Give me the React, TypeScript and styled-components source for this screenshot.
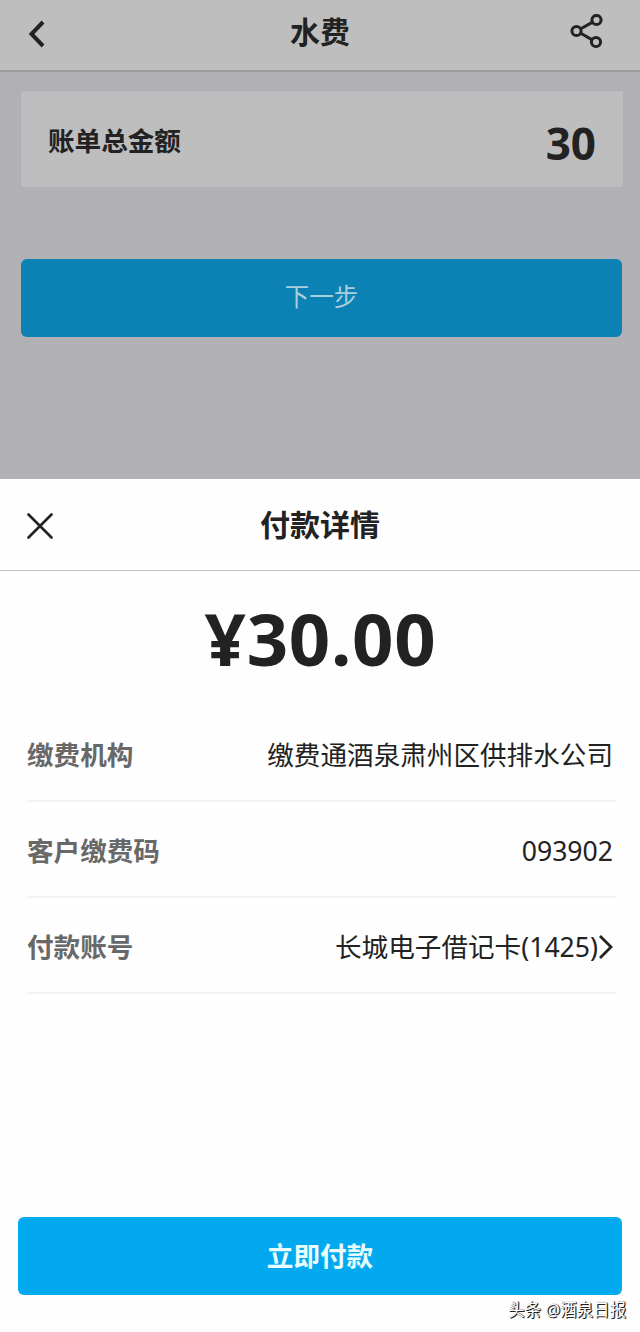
import React from 'react';
import styled, { createGlobalStyle } from 'styled-components';

const ink = '#222222';

const GlobalStyle = createGlobalStyle`
  *, *::before, *::after { box-sizing: border-box; }
  body {
    margin: 0;
    background: #fefefe;
    font-family: 'Noto Sans', 'Noto Sans CJK SC', sans-serif;
    color: ${ink};
  }
  button { font: inherit; color: inherit; border: 0; padding: 0; background: none; }
  svg { display: block; }
`;

const Screen = styled.div`
  display: flex;
  flex-direction: column;
  width: 640px;
  height: 1332px;
  overflow: hidden;
`;

const Backdrop = styled.section`
  flex: 0 0 479px;
  background: #b1b0b4;
`;

const Bar = styled.header<{ $height: number; $line: string; $thick: number }>`
  display: grid;
  grid-template-columns: 90px 1fr 90px;
  align-items: center;
  height: ${(p) => p.$height}px;
  border-bottom: ${(p) => p.$thick}px solid ${(p) => p.$line};
`;

const TopBar = styled(Bar)`
  background: #bebebe;
  padding-bottom: 6px;
`;

const Title = styled.h1`
  margin: 0;
  text-align: center;
  font-size: 30px;
  line-height: 40px;
  font-weight: 700;
`;

const IconButton = styled.button<{ $left: number; $drop?: number }>`
  justify-self: start;
  padding: ${(p) => p.$drop ?? 0}px 0 0 ${(p) => p.$left}px;
`;

const BillCard = styled.div`
  display: flex;
  align-items: center;
  justify-content: space-between;
  height: 96px;
  margin: 19px 17px 0 21px;
  padding: 0 27px;
  border-radius: 3px;
  background: #bebebe;
  box-shadow: inset 0 0 8px #bcbbc3;
`;

const BillLabel = styled.span`
  padding-top: 4px;
  font-size: 26.6px;
  line-height: 40px;
  font-weight: 700;
`;

const BillValue = styled.span`
  padding-top: 7px;
  font-size: 44px;
  line-height: 50px;
  font-weight: 700;
`;

const WideButton = styled.button<{ $dim?: boolean }>`
  display: flex;
  align-items: center;
  justify-content: center;
  height: 78px;
  border-radius: 6px;
  background: ${(p) => (p.$dim ? '#0c81b3' : '#02a9ef')};
  color: ${(p) => (p.$dim ? '#a9cfdf' : '#e9fdff')};
  font-size: ${(p) => (p.$dim ? 24.5 : 26.6)}px;
  font-weight: ${(p) => (p.$dim ? 400 : 700)};
  line-height: 40px;
`;

const NextButton = styled(WideButton)`
  width: 601px;
  margin: 72px 0 0 21px;
  padding-bottom: 2px;
`;

const Sheet = styled.section`
  display: flex;
  flex-direction: column;
  flex: 1;
  background: #fefefe;
`;

const Amount = styled.div`
  height: 135px;
  padding-left: 1px;
  text-align: center;
  font-size: 72.5px;
  line-height: 133px;
  letter-spacing: 0.7px;
  font-weight: 700;
`;

const Details = styled.dl`
  margin: 0 24px 0 27px;
`;

const Row = styled.div`
  display: flex;
  align-items: center;
  justify-content: space-between;
  height: 96px;
  padding: 3px 3px 0 0;
  border-bottom: 2px solid #f4f4f4;
  font-size: 26.6px;
  line-height: 40px;
`;

const Term = styled.dt`
  color: #686868;
  font-weight: 700;
`;

const Value = styled.dd`
  display: flex;
  align-items: center;
  margin: 0;
`;

const PayButton = styled(WideButton)`
  width: 604px;
  margin: auto 0 0 18px;
`;

const Credit = styled.footer`
  height: 37px;
  padding: 3px 14px 0 0;
  text-align: right;
  font-size: 16.5px;
  line-height: 24px;
  color: #ffffff;
  text-shadow: 1px 1px 0 #222, 1px 0 1px #222;
`;

const BackIcon = () => (
  <svg width="20" height="30" viewBox="0 0 20 30" fill="none" stroke={ink} strokeWidth="4">
    <path d="M17 3 L5.5 15 L17 27" />
  </svg>
);

const ShareIcon = () => (
  <svg width="34" height="36" viewBox="0 0 34 36" fill="none" stroke={ink} strokeWidth="3">
    <circle cx="6.5" cy="17" r="4.6" />
    <circle cx="26.5" cy="6" r="4.6" />
    <circle cx="26" cy="28" r="4.6" />
    <path d="M10.8 14.8 L22.2 8.4 M10.8 19.3 L21.8 25.6" />
  </svg>
);

const CloseIcon = () => (
  <svg width="26" height="26" viewBox="0 0 26 26" fill="none" stroke={ink} strokeWidth="2.6" strokeLinecap="round">
    <path d="M1.5 1.5 L24.5 24.5 M24.5 1.5 L1.5 24.5" />
  </svg>
);

const ChevronIcon = () => (
  <svg width="15" height="26" viewBox="0 0 15 26" fill="none" stroke={ink} strokeWidth="2.8">
    <path d="M2 2 L13 13 L2 24" />
  </svg>
);

const details = [
  { label: '缴费机构', value: '缴费通酒泉肃州区供排水公司' },
  { label: '客户缴费码', value: '093902' },
  { label: '付款账号', value: '长城电子借记卡(1425)', link: true },
];

export default function App() {
  return (
    <>
      <GlobalStyle />
      <Screen>
        <Backdrop>
          <TopBar $height={72} $line="#9c9c9c" $thick={2}>
            <IconButton $left={26} $drop={3} aria-label="返回"><BackIcon /></IconButton>
            <Title>水费</Title>
            <IconButton $left={20} aria-label="分享"><ShareIcon /></IconButton>
          </TopBar>
          <BillCard>
            <BillLabel>账单总金额</BillLabel>
            <BillValue>30</BillValue>
          </BillCard>
          <NextButton $dim>下一步</NextButton>
        </Backdrop>
        <Sheet>
          <Bar $height={92} $line="#c2c2c2" $thick={1}>
            <IconButton $left={27} $drop={2} aria-label="关闭"><CloseIcon /></IconButton>
            <Title as="h2">付款详情</Title>
          </Bar>
          <Amount>¥30.00</Amount>
          <Details>
            {details.map((d) => (
              <Row key={d.label}>
                <Term>{d.label}</Term>
                <Value>
                  {d.value}
                  {d.link && <ChevronIcon />}
                </Value>
              </Row>
            ))}
          </Details>
          <PayButton>立即付款</PayButton>
          <Credit>头条 @酒泉日报</Credit>
        </Sheet>
      </Screen>
    </>
  );
}
